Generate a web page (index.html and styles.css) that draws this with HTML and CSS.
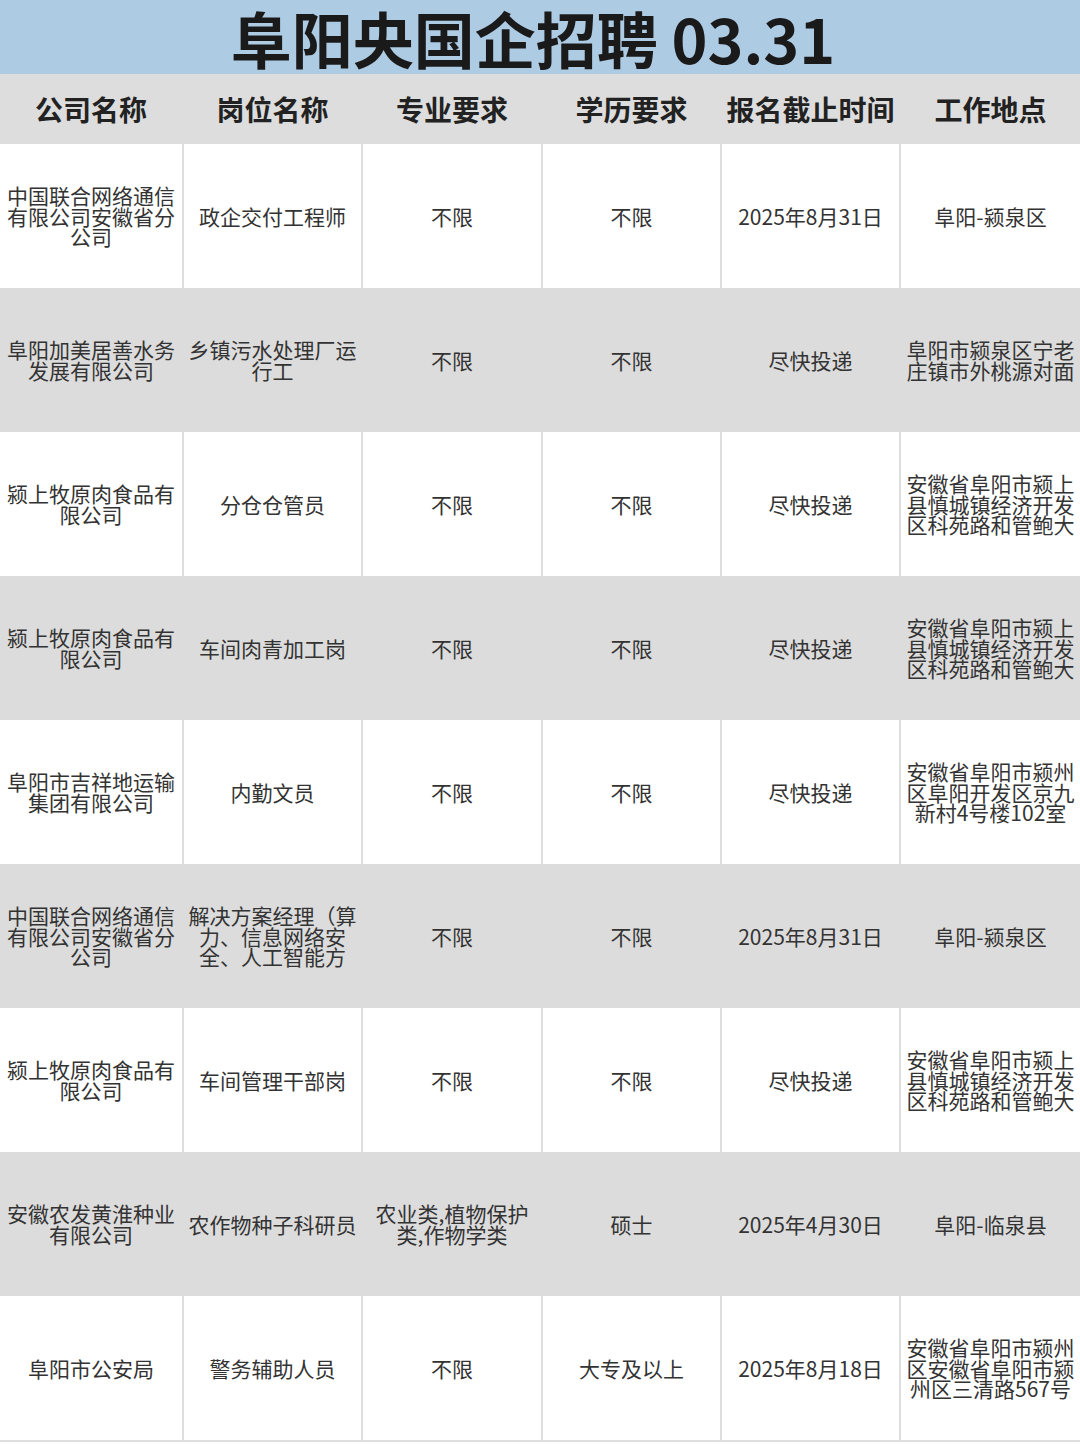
FILE: index.html
```html
<!DOCTYPE html>
<html lang="zh-CN">
<head>
<meta charset="utf-8">
<title>阜阳央国企招聘 03.31</title>
<link rel="stylesheet" href="styles.css">
</head>
<body>
<div class="page">
  <div class="title">阜阳央国企招聘 03.31</div>
  <div class="row head">
    <div class="cell">公司名称</div>
    <div class="cell">岗位名称</div>
    <div class="cell">专业要求</div>
    <div class="cell">学历要求</div>
    <div class="cell">报名截止时间</div>
    <div class="cell">工作地点</div>
  </div>
  <div class="row white">
    <div class="cell">中国联合网络通信有限公司安徽省分公司</div>
    <div class="cell">政企交付工程师</div>
    <div class="cell">不限</div>
    <div class="cell">不限</div>
    <div class="cell">2025年8月31日</div>
    <div class="cell">阜阳-颍泉区</div>
  </div>
  <div class="row gray">
    <div class="cell">阜阳加美居善水务发展有限公司</div>
    <div class="cell">乡镇污水处理厂运行工</div>
    <div class="cell">不限</div>
    <div class="cell">不限</div>
    <div class="cell">尽快投递</div>
    <div class="cell">阜阳市颍泉区宁老庄镇市外桃源对面</div>
  </div>
  <div class="row white">
    <div class="cell">颍上牧原肉食品有限公司</div>
    <div class="cell">分仓仓管员</div>
    <div class="cell">不限</div>
    <div class="cell">不限</div>
    <div class="cell">尽快投递</div>
    <div class="cell">安徽省阜阳市颍上县慎城镇经济开发区科苑路和管鲍大</div>
  </div>
  <div class="row gray">
    <div class="cell">颍上牧原肉食品有限公司</div>
    <div class="cell">车间肉青加工岗</div>
    <div class="cell">不限</div>
    <div class="cell">不限</div>
    <div class="cell">尽快投递</div>
    <div class="cell">安徽省阜阳市颍上县慎城镇经济开发区科苑路和管鲍大</div>
  </div>
  <div class="row white">
    <div class="cell">阜阳市吉祥地运输集团有限公司</div>
    <div class="cell">内勤文员</div>
    <div class="cell">不限</div>
    <div class="cell">不限</div>
    <div class="cell">尽快投递</div>
    <div class="cell">安徽省阜阳市颍州区阜阳开发区京九新村4号楼102室</div>
  </div>
  <div class="row gray">
    <div class="cell">中国联合网络通信有限公司安徽省分公司</div>
    <div class="cell">解决方案经理（算力、信息网络安全、人工智能方</div>
    <div class="cell">不限</div>
    <div class="cell">不限</div>
    <div class="cell">2025年8月31日</div>
    <div class="cell">阜阳-颍泉区</div>
  </div>
  <div class="row white">
    <div class="cell">颍上牧原肉食品有限公司</div>
    <div class="cell">车间管理干部岗</div>
    <div class="cell">不限</div>
    <div class="cell">不限</div>
    <div class="cell">尽快投递</div>
    <div class="cell">安徽省阜阳市颍上县慎城镇经济开发区科苑路和管鲍大</div>
  </div>
  <div class="row gray">
    <div class="cell">安徽农发黄淮种业有限公司</div>
    <div class="cell">农作物种子科研员</div>
    <div class="cell">农业类,植物保护类,作物学类</div>
    <div class="cell">硕士</div>
    <div class="cell">2025年4月30日</div>
    <div class="cell">阜阳-临泉县</div>
  </div>
  <div class="row white last">
    <div class="cell">阜阳市公安局</div>
    <div class="cell">警务辅助人员</div>
    <div class="cell">不限</div>
    <div class="cell">大专及以上</div>
    <div class="cell">2025年8月18日</div>
    <div class="cell">安徽省阜阳市颍州区安徽省阜阳市颍州区三清路567号</div>
  </div>
</div>
</body>
</html>
```

FILE: styles.css
```css
html, body {
  margin: 0;
  padding: 0;
  background: #ffffff;
}

.page {
  width: 1080px;
  font-family: "Noto Sans CJK SC", "Noto Sans", sans-serif;
  color: #333333;
}

.title {
  height: 74px;
  background: #aecbe4;
  color: #1a1a1a;
  font-size: 61px;
  font-weight: 700;
  line-height: 72px;
  text-align: center;
  padding-right: 14px;
  padding-top: 2px;
  box-sizing: border-box;
  white-space: nowrap;
}

.row {
  display: grid;
  grid-template-columns: 184px 179px 180px 179px 179px 179px;
  height: 144px;
}

.row.head {
  height: 70px;
  background: #dddddd;
}

.row.gray {
  background: #dcdcdc;
}

.row.white {
  background: #ffffff;
}

.row.last {
  border-bottom: 2px solid #dedede;
}

.cell {
  display: flex;
  align-items: center;
  justify-content: center;
  text-align: center;
  box-sizing: border-box;
  padding: 0 4px;
  font-size: 21px;
  line-height: 20.7px;
  overflow: hidden;
  border-right: 2px solid #dedede;
}

.cell:last-child {
  border-right: none;
}

.row.gray .cell,
.row.head .cell {
  border-right-color: transparent;
}

.row.head .cell {
  font-size: 28px;
  font-weight: 700;
  color: #222222;
  line-height: 30px;
  padding-top: 0;
}
```
